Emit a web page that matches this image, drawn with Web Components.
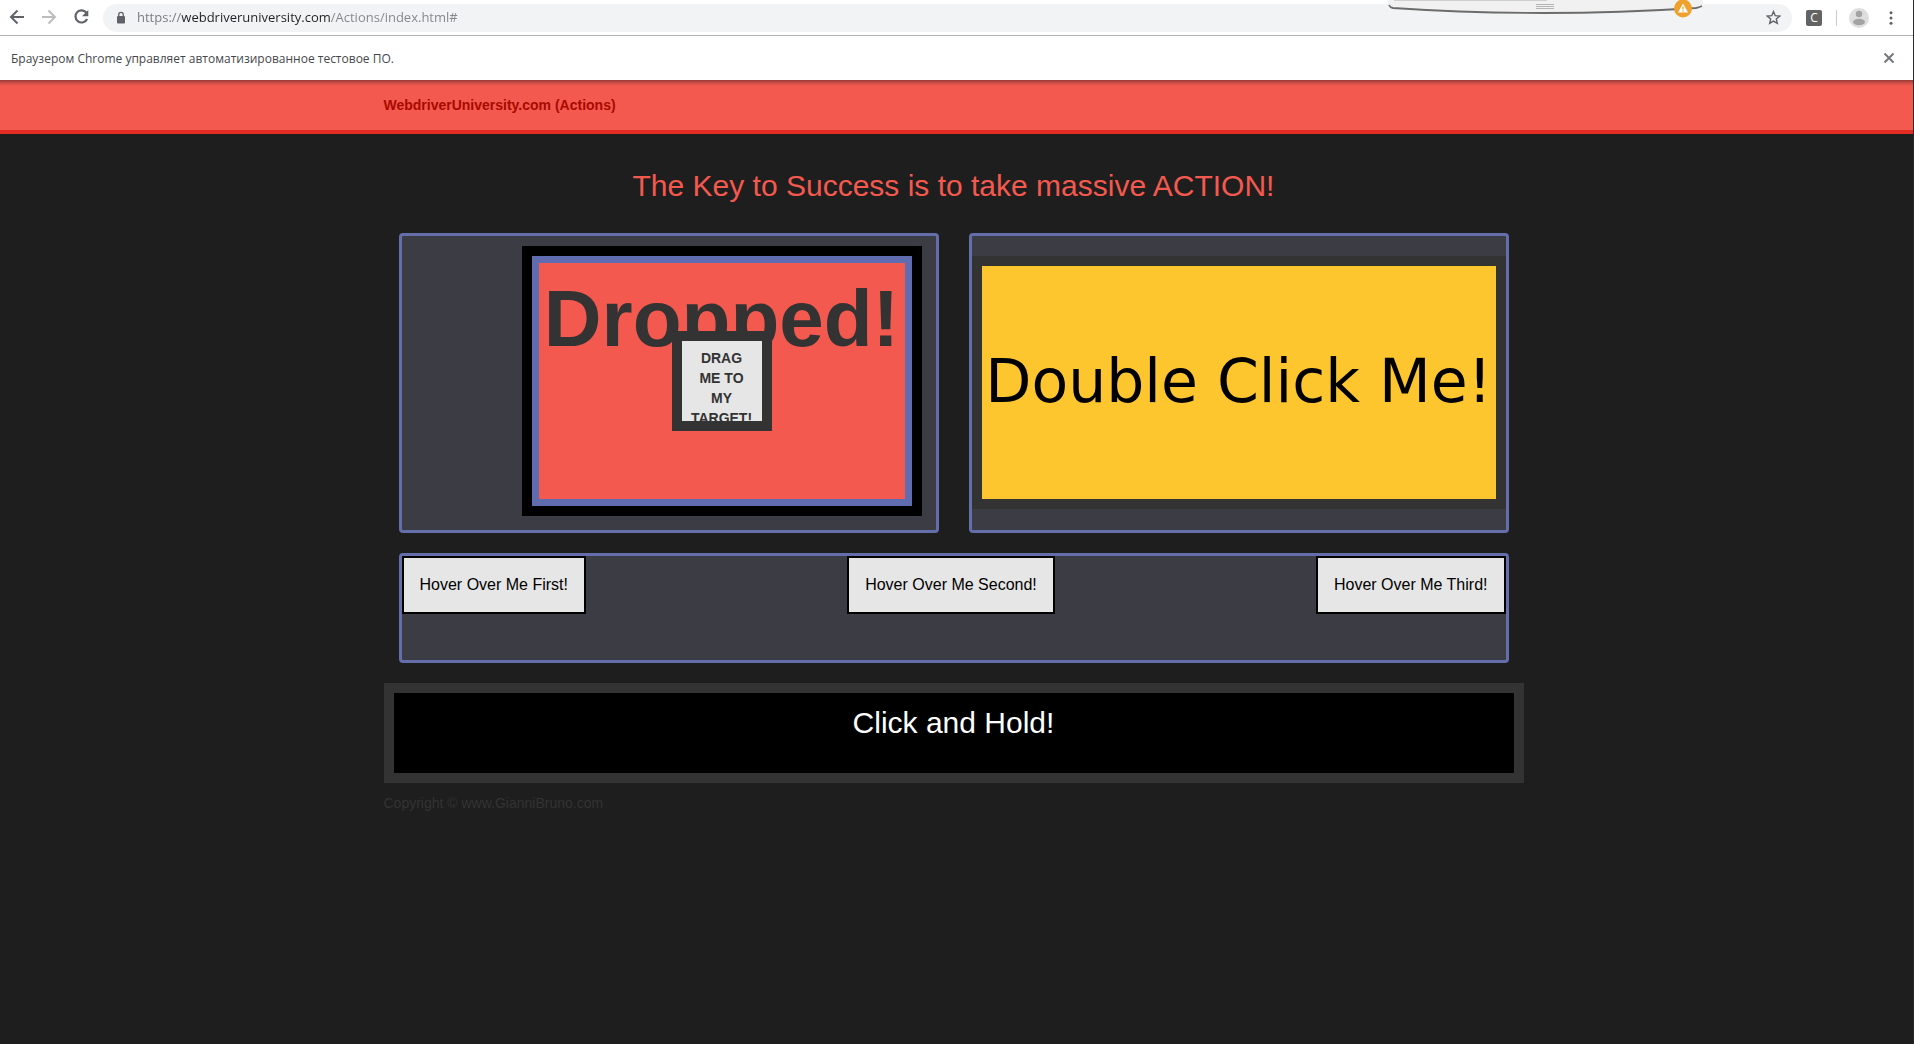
<!DOCTYPE html>
<html lang="en">
<head>
<meta charset="utf-8">
<title>WebdriverUniversity.com (Actions)</title>
<style>
  html, body { height: 100%; }
  body { margin: 0; background: #1e1e1e; font-family: "Liberation Sans", Arial, sans-serif; font-size: 14px; line-height: 20px; color: #333; }
</style>
</head>
<body>
<app-window></app-window>

<script>
function define(name, html) {
  const template = document.createElement('template');
  template.innerHTML = '<style>*{box-sizing:border-box}button{font:inherit;margin:0;cursor:pointer}</style>' + html;
  customElements.define(name, class extends HTMLElement {
    constructor() {
      super();
      this.attachShadow({ mode: 'open' }).append(template.content.cloneNode(true));
    }
  });
}

define('browser-toolbar', `
<style>
  :host { display: flex; align-items: center; box-sizing: border-box; height: 36px; padding: 0 12px 4px 7px; background: #fff; border-bottom: 1px solid #b0b0b0; }
  button { border: 0; padding: 0; background: none; display: flex; flex: none; color: #5f6368; }
  svg { display: block; }
  .nav { display: flex; gap: 12px; margin-right: 12px; padding-top: 3px; }
  .nav button:nth-child(2) { color: #bcbdbf; }
  .box { flex: 1; min-width: 0; height: 28px; margin-top: 4px; border-radius: 14px; background: #f1f3f4; display: flex; align-items: center; padding: 0 11px 0 12px; gap: 10px; }
  input { flex: 1; min-width: 0; border: 0; outline: 0; padding: 0 0 2px; height: 24px; font: 13px/22px "Open Sans", "Noto Sans", sans-serif; color: #202124;
    background: linear-gradient(90deg, #75797d 45px, #202124 45px 193px, #80868b 193px); -webkit-background-clip: text; background-clip: text; -webkit-text-fill-color: transparent; }
  .tools { display: flex; align-items: center; padding-top: 4px; margin-left: 14px; }
  .ext { width: 16px; height: 16px; border-radius: 2px; background: #636363; color: #fff; font: 12px/16px "Open Sans", sans-serif; justify-content: center; }
  .sep { width: 1px; height: 16px; background: #c8cacc; margin: 0 12px 0 14px; }
  .more { margin-left: 12px; }
</style>
<div class="nav">
  <button aria-label="Back"><svg width="20" height="22" viewBox="0 0 20 22" fill="none" stroke="currentColor" stroke-width="2"><path d="M17 11H4.500M10.500 4.500L4 11l6.500 6.500"/></svg></button>
  <button aria-label="Forward"><svg width="20" height="22" viewBox="0 0 20 22" fill="none" stroke="currentColor" stroke-width="2"><path d="M3 11h12.500M9.500 4.500L16 11l-6.500 6.500"/></svg></button>
  <button aria-label="Reload"><svg width="20" height="22" viewBox="0 0 20 22"><path d="M15.600 6.900A6.100 6.100 0 1 0 16.100 13" fill="none" stroke="currentColor" stroke-width="2.200"/><path d="M17.300 4v6.300H11z" fill="currentColor"/></svg></button>
</div>
<div class="box">
  <svg width="12" height="14" viewBox="0 0 12 14"><rect x="2" y="5" width="8" height="7.500" rx="1" fill="#5f6368"/><path d="M3.700 5.500V3.700a2.300 2.300 0 0 1 4.600 0v1.800" fill="none" stroke="#5f6368" stroke-width="1.300"/></svg>
  <input type="text" aria-label="Address" value="https://webdriveruniversity.com/Actions/index.html#">
  <button aria-label="Bookmark this page"><svg width="15" height="15" viewBox="0 0 15 15" fill="none" stroke="currentColor" stroke-width="1.400"><path d="M7.500 1.600l1.700 4.100 4.500.4-3.400 2.900 1 4.400-3.800-2.300-3.800 2.300 1-4.400L1.300 6.100l4.500-.4z"/></svg></button>
</div>
<div class="tools">
  <button class="ext" aria-label="Extension">C</button>
  <span class="sep"></span>
  <button aria-label="Profile"><svg width="20" height="20" viewBox="0 0 20 20"><circle cx="10" cy="10" r="10" fill="#dedede"/><circle cx="10" cy="6" r="3.200" fill="#a3a3a3"/><ellipse cx="10" cy="14" rx="6" ry="3.200" fill="#a3a3a3"/></svg></button>
  <button class="more" aria-label="Menu"><svg width="20" height="20" viewBox="0 0 20 20" fill="#5f6368"><circle cx="10" cy="4.800" r="1.500"/><circle cx="10" cy="10" r="1.500"/><circle cx="10" cy="15.200" r="1.500"/></svg></button>
</div>`);

define('screen-tab', `
<style>
  :host { display: block; position: absolute; top: 0; right: 207px; z-index: 2; pointer-events: none; }
  svg { display: block; }
</style>
<svg width="320" height="18" viewBox="0 0 320 18">
  <path d="M2 0V5Q3 8 7 8Q158 18 310 8Q315 7 317 4V0Z" fill="#f1f1f1"/>
  <path d="M3 5Q4 7.500 7 8Q158 18 310 8Q313 7.500 316 6" fill="none" stroke="#6c6c6c" stroke-width="1.800"/>
  <path d="M8 .5H161" stroke="#cfcfcf"/>
  <path d="M150 4.500h18M150 6.500h18M150 8.500h18" stroke="#b5b5b5"/>
  <circle cx="297" cy="8.500" r="9" fill="#f0a02c"/>
  <path d="M297 3.500L302 12.500H292Z" fill="#fff"/>
  <path d="M297 6.500v3M297 10.500v1.200" stroke="#f0a02c" stroke-width="1.300"/>
</svg>`);

define('info-bar', `
<style>
  :host { display: flex; align-items: center; justify-content: space-between; box-sizing: border-box; height: 44px; padding: 0 18px 0 11px; background: #fff; color: #45484b; font: 12px/20px "Open Sans", "Noto Sans", sans-serif; }
  span { padding-top: 2px; }
  button { border: 0; background: none; padding: 0; display: flex; }
</style>
<span><slot></slot></span>
<button aria-label="Close"><svg width="12" height="12" viewBox="0 0 12 12" stroke="#75787b" stroke-width="2"><path d="M1.500 1.500l9 9M10.500 1.500l-9 9"/></svg></button>`);

define('site-header', `
<style>
  :host { display: block; background: linear-gradient(#963c37, #cf4e47 3px, #f4594f 6px); border-bottom: 4px solid #e32d22; padding: 15px 6px 15px 0; }
  div { max-width: 1140px; margin: 0 auto; }
  a { color: #a80900; font-weight: bold; text-decoration: none; }
</style>
<div><a href="#"><slot></slot></a></div>`);

define('action-card', `
<style>
  :host { display: flex; box-sizing: border-box; background: #3c3c45; border: 3px solid #646eab; border-radius: 4px; }
</style>
<slot></slot>`);

define('drop-target', `
<style>
  :host { display: block; position: relative; box-sizing: border-box; width: 400px; height: 270px; border: 10px solid #000; margin: 10px 14px 0 auto; }
  .zone { height: 100%; border: 7px solid #606cb0; background: #f4594f; padding-top: 12px; text-align: center; font-size: 80px; line-height: 88px; font-weight: bold; }
</style>
<div class="zone"><slot></slot></div><slot name="item"></slot>`);

define('drag-item', `
<style>
  :host { display: block; position: absolute; inset: 0; margin: auto; box-sizing: border-box; width: 100px; height: 100px; overflow: hidden; border: 10px solid #333; background: #e6e6e6; padding: 7px; text-align: center; font-weight: bold; }
</style>
<slot></slot>`);

define('double-click', `
<style>
  :host { display: block; flex: 1; margin: 20px 0; }
  button { display: block; width: 100%; height: 253px; border: 10px solid #333; background: #fdc52e; color: #000; padding: 0 0 4px; font: 60px/70px "DejaVu Sans", Verdana, sans-serif; white-space: nowrap; }
</style>
<button><slot></slot></button>`);

define('hover-button', `
<style>
  :host { display: block; }
  button { display: block; border: 2px solid #000; background: #e6e6e6; color: #000; padding: 15px 16px; font-size: 16px; line-height: 24px; }
</style>
<button><slot></slot></button>`);

define('hold-button', `
<style>
  :host { display: block; }
  button { display: flex; justify-content: center; width: 100%; height: 100px; border: 10px solid #333; background: #000; color: #fff; padding: 12px; font-size: 30px; line-height: 36px; }
</style>
<button><slot></slot></button>`);

define('actions-page', `
<style>
  :host { display: block; padding: 34px 6px 0 0; }
  .wrap { max-width: 1140px; margin: 0 auto; }
  h1 { margin: 0 0 29px; font-size: 30px; line-height: 36px; font-weight: normal; text-align: center; color: #f4594f; }
  .grid { display: grid; grid-template-columns: 1fr 1fr; gap: 20px 30px; padding: 0 15px; margin-bottom: 20px; }
  .grid > * { min-height: 300px; }
  .grid > .row { grid-column: 1 / -1; min-height: 110px; justify-content: space-between; align-items: flex-start; }
  footer { margin-top: 10px; color: #333; }
</style>
<div class="wrap">
  <h1>The Key to Success is to take massive ACTION!</h1>
  <div class="grid">
    <action-card>
      <drop-target>Dropped!<drag-item slot="item" draggable="true">DRAG ME TO MY TARGET!</drag-item></drop-target>
    </action-card>
    <action-card><double-click>Double Click Me!</double-click></action-card>
    <action-card class="row">
      <hover-button>Hover Over Me First!</hover-button>
      <hover-button>Hover Over Me Second!</hover-button>
      <hover-button>Hover Over Me Third!</hover-button>
    </action-card>
  </div>
  <hold-button>Click and Hold!</hold-button>
  <footer>Copyright © www.GianniBruno.com</footer>
</div>`);

define('app-window', `
<style>
  :host { display: block; position: relative; box-sizing: border-box; min-height: 100%; border-right: 1px solid #2b2b2b; }
</style>
<browser-toolbar></browser-toolbar>
<screen-tab></screen-tab>
<info-bar lang="ru">Браузером Chrome управляет автоматизированное тестовое ПО.</info-bar>
<site-header>WebdriverUniversity.com (Actions)</site-header>
<actions-page></actions-page>`);
</script>
</body>
</html>
